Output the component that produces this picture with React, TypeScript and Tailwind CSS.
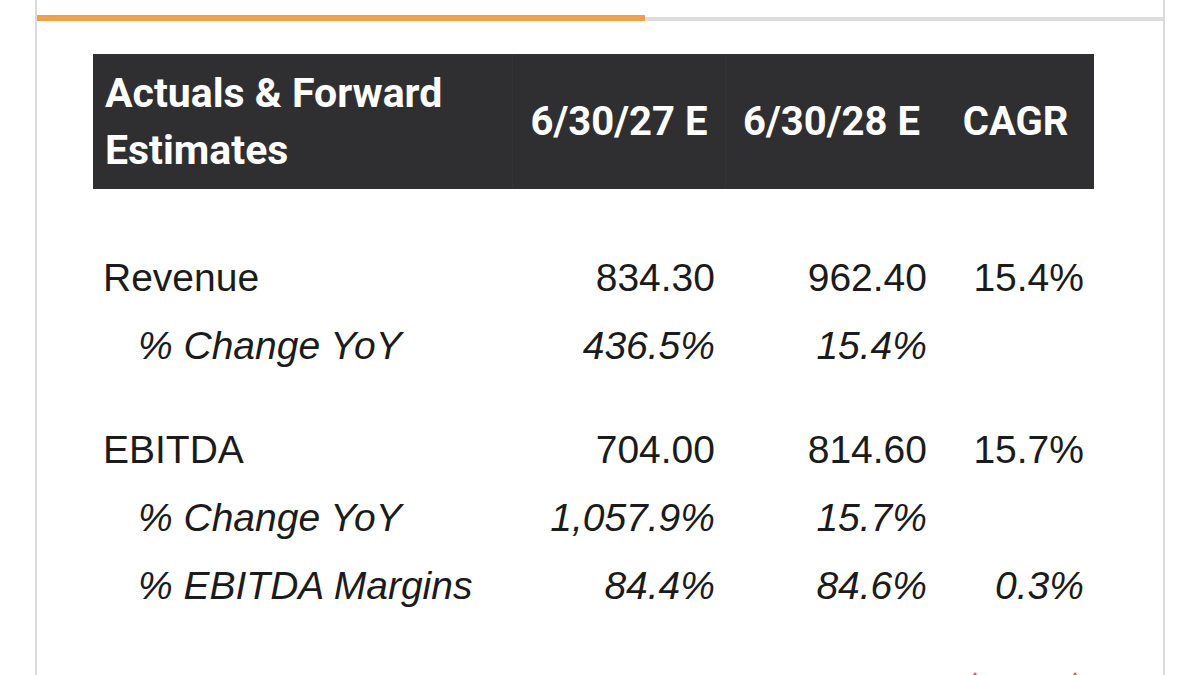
const COLS = 'grid grid-cols-[419px_213px_212px_157px]';

type Row = { label: string; sub?: boolean; values: string[] };

const GROUPS: Row[][] = [
  [
    { label: 'Revenue', values: ['834.30', '962.40', '15.4%'] },
    { label: '% Change YoY', sub: true, values: ['436.5%', '15.4%', ''] },
  ],
  [
    { label: 'EBITDA', values: ['704.00', '814.60', '15.7%'] },
    { label: '% Change YoY', sub: true, values: ['1,057.9%', '15.7%', ''] },
    { label: '% EBITDA Margins', sub: true, values: ['84.4%', '84.6%', '0.3%'] },
  ],
];

function DataRow({ row }: { row: Row }) {
  return (
    <div
      className={`${COLS} h-[68px] items-center text-[39px] leading-[68px] text-[#1b1b1b] ${row.sub ? 'italic' : ''}`}
      style={{ fontFamily: '"Liberation Sans", Arial, sans-serif' }}
    >
      <div className={row.sub ? 'pl-[45px]' : 'pl-[10px]'}>{row.label}</div>
      {row.values.map((v, i) => (
        <div key={i} className="pr-[10px] text-right">
          {v}
        </div>
      ))}
    </div>
  );
}

// red markers peeking in at the bottom edge
function Peek() {
  return (
    <svg width="14" height="8" viewBox="0 0 14 8" className="block">
      <path d="M7 1 L12 8 H2 Z" fill="#e4604c" />
    </svg>
  );
}

export default function App() {
  return (
    <div className="h-[675px] w-[1200px] overflow-hidden bg-white" style={{ fontFamily: 'Roboto, "Liberation Sans", sans-serif' }}>
      <div className="mx-[35px] h-full border-x-2 border-[#dadada]">
        {/* progress */}
        <div className="flex items-center pt-[15px]">
          <div className="h-[6px] w-[608px] bg-[#efa04b]" />
          <div className="mt-[2px] h-[4px] flex-1 bg-[#dcdcdc]" />
        </div>

        <div className="pl-[56px] pt-[33px]">
          {/* header */}
          <div className={`${COLS} h-[135px] w-[1001px] items-center bg-[#2f2f31] font-bold text-white`}>
            <div className="pl-[12px] text-[41px] leading-[57px]">
              Actuals &amp; Forward
              <br />
              Estimates
            </div>
            <div className="flex h-full items-center justify-center border-l border-[#343437] text-[40px]">6/30/27 E</div>
            <div className="flex h-full items-center justify-center border-l border-[#343437] text-[40px]">6/30/28 E</div>
            <div className="flex h-full items-center justify-center text-[40px]">CAGR</div>
          </div>

          <div className="pt-[55px]">
            {GROUPS.map((g, gi) => (
              <div key={gi} className={gi > 0 ? 'pt-[36px]' : ''}>
                {g.map((r, ri) => (
                  <DataRow key={ri} row={r} />
                ))}
              </div>
            ))}
          </div>

          <div className={`${COLS} pt-[51px]`}>
            <div />
            <div />
            <div />
            <div className="flex justify-between pl-[31px] pr-[12px]">
              <Peek />
              <Peek />
            </div>
          </div>
        </div>
      </div>
    </div>
  );
}
